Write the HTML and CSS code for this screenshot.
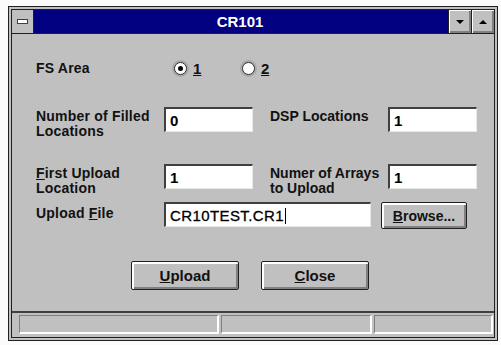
FILE: index.html
```html
<!DOCTYPE html>
<html lang="en">
<head>
    <meta charset="UTF-8">
    <title>CR101</title>
    <link rel="stylesheet" href="styles.css">
</head>
<body>
    <div class="window">
        <div class="frame">
            <!-- Title bar -->
            <div class="title-bar">
                <div class="sys-btn"><span class="sys-dash"></span></div>
                <div class="title">CR101</div>
                <div class="cap-btn"><span class="arrow down"></span></div>
                <div class="cap-btn"><span class="arrow up"></span></div>
            </div>

            <div class="content">
                <div class="row row-fs">
                    <div class="label fs-label">FS Area</div>
                    <label class="radio">
                        <span class="radio-box checked"><span class="dot"></span></span>
                        <span class="radio-text"><u>1</u></span>
                    </label>
                    <label class="radio">
                        <span class="radio-box"></span>
                        <span class="radio-text"><u>2</u></span>
                    </label>
                </div>

                <div class="row row-pair first">
                    <div class="label">Number of Filled<br>Locations</div>
                    <div class="edit short">0</div>
                    <div class="label second">DSP Locations</div>
                    <div class="edit short">1</div>
                </div>

                <div class="row row-pair">
                    <div class="label"><u>F</u>irst Upload<br>Location</div>
                    <div class="edit short">1</div>
                    <div class="label second">Numer of Arrays<br>to Upload</div>
                    <div class="edit short">1</div>
                </div>

                <div class="row row-file">
                    <div class="label">Upload <u>F</u>ile</div>
                    <div class="edit long">CR10TEST.CR1<span class="caret"></span></div>
                    <div class="button browse"><u>B</u>rowse...</div>
                </div>

                <div class="row row-buttons">
                    <div class="button big"><u>U</u>pload</div>
                    <div class="button big"><u>C</u>lose</div>
                </div>
            </div>

            <!-- Status bar -->
            <div class="status-bar">
                <div class="pane p1"></div>
                <div class="pane p2"></div>
                <div class="pane p3"></div>
            </div>
        </div>
    </div>
</body>
</html>
```

FILE: styles.css
```css
:root {
    --face: #c0c0c0;
    --shadow: #808080;
    --dark: #202020;
    --title: #000080;
}

body {
    margin: 0;
    background: #fbfbfb;
    font-family: "Liberation Sans", Arial, sans-serif;
    font-size: 14px;
    font-weight: bold;
    color: #111;
}

.window {
    margin: 6px 0 0 8px;
    width: 490px;
    height: 335px;
    border: 1px solid var(--dark);
    padding: 2px;
    background: var(--face);
    box-sizing: border-box;
}

.frame {
    border: 1px solid var(--dark);
    height: 100%;
    box-sizing: border-box;
    display: flex;
    flex-direction: column;
}

.title-bar {
    display: flex;
    height: 23px;
    border-bottom: 1px solid var(--dark);
    flex-shrink: 0;
}

.sys-btn {
    width: 21px;
    border-right: 1px solid var(--dark);
    background: var(--face);
    display: flex;
    align-items: center;
    justify-content: center;
}

.sys-dash {
    width: 9px;
    height: 3px;
    background: #fff;
    border: 1px solid #404040;
}

.title {
    flex: 1;
    background: var(--title);
    color: #fff;
    font-size: 15px;
    text-align: center;
    line-height: 23px;
    padding-right: 2px;
}

.cap-btn {
    width: 22px;
    border-left: 1px solid var(--dark);
    background: var(--face);
    box-shadow: inset 1px 1px 0 #fff, inset -2px -2px 0 var(--shadow);
    display: flex;
    align-items: center;
    justify-content: center;
}

.arrow {
    width: 0;
    height: 0;
    border-left: 4px solid transparent;
    border-right: 4px solid transparent;
}

.arrow.down { border-top: 4px solid #000; }
.arrow.up { border-bottom: 4px solid #000; }

.content {
    flex: 1;
    padding: 24px 0 0 24px;
    border-bottom: 2px solid #404040;
}

.row {
    display: flex;
}

.label {
    width: 128px;
    line-height: 15px;
    flex-shrink: 0;
    white-space: nowrap;
    letter-spacing: 0.2px;
}

.row-fs {
    height: 20px;
    align-items: center;
}

.fs-label { width: 138px; }

.radio {
    display: flex;
    align-items: center;
    gap: 6px;
    width: 68px;
    font-size: 15px;
}

.radio-box {
    width: 11px;
    height: 11px;
    border: 1px solid #303030;
    border-radius: 50%;
    background: #fff;
    box-shadow: 0 0 0 2px #a8a8a8;
    display: flex;
    align-items: center;
    justify-content: center;
}

.dot {
    width: 5px;
    height: 5px;
    border-radius: 50%;
    background: #000;
}

.row-pair {
    margin-top: 32px;
    height: 25px;
}

.row-pair.first { margin-top: 29px; }

.row-pair .label { padding-top: 2px; }

.label.second {
    width: 118px;
    margin-left: 17px;
    letter-spacing: 0;
}

.edit {
    height: 25px;
    box-sizing: border-box;
    background: #fff;
    border-top: 2px solid #404040;
    border-left: 2px solid #404040;
    border-right: 1px solid #e8e8e8;
    border-bottom: 1px solid #e8e8e8;
    padding: 3px 0 0 4px;
    font-size: 15px;
    color: #000;
}

.edit.short { width: 89px; }

.edit.long {
    width: 207px;
    font-weight: normal;
    letter-spacing: 0.4px;
    -webkit-text-stroke: 0.3px #000;
}

.caret {
    display: inline-block;
    width: 1px;
    height: 16px;
    background: #000;
    vertical-align: -3px;
    margin-left: 1px;
}

.row-file {
    margin-top: 13px;
    align-items: flex-start;
}

.row-file .label { padding-top: 4px; }

.button {
    box-sizing: border-box;
    border: 1px solid var(--dark);
    border-radius: 2px;
    background: var(--face);
    box-shadow: inset 1px 1px 0 #fff, inset 2px 2px 0 #fff, inset -2px -2px 0 var(--shadow);
    display: flex;
    align-items: center;
    justify-content: center;
}

.browse {
    width: 86px;
    height: 27px;
    margin-left: 10px;
}

.row-buttons {
    margin-top: 32px;
    padding-left: 95px;
    gap: 22px;
}

.big {
    width: 108px;
    height: 29px;
    font-size: 15px;
}

.status-bar {
    height: 24px;
    display: flex;
    padding: 2px 0 3px 7px;
    gap: 2px;
    box-sizing: border-box;
    flex-shrink: 0;
}

.pane {
    border-top: 1px solid var(--shadow);
    border-left: 1px solid var(--shadow);
    border-right: 2px solid #fff;
    border-bottom: 2px solid #fff;
}

.p1 { width: 197px; }
.p2 { width: 148px; }
.p3 { flex: 1; margin-right: 1px; }
```
